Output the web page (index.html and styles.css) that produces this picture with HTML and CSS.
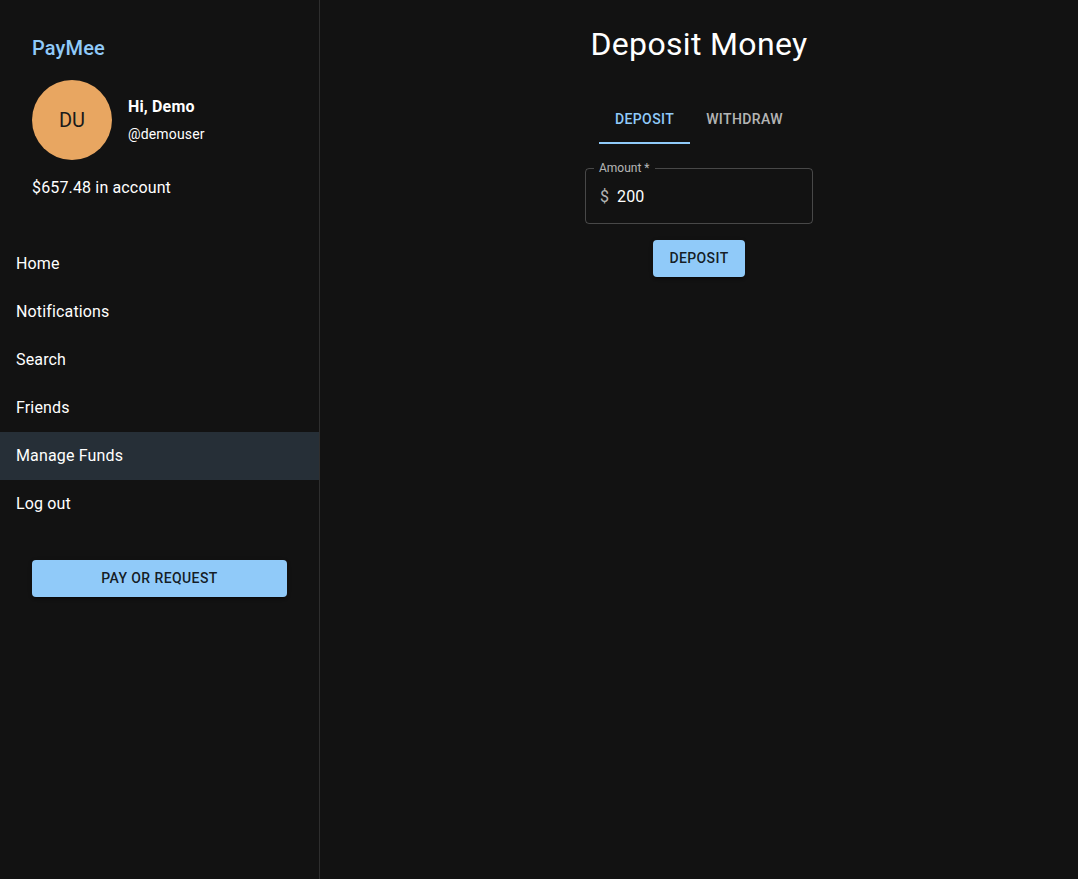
FILE: index.html
```html
<!DOCTYPE html>
<html lang="en">
<head>
<meta charset="utf-8">
<title>PayMee - Deposit Money</title>
<link rel="stylesheet" href="styles.css">
</head>
<body>
<div class="app">
  <aside class="sidebar">
    <div class="brand">PayMee</div>
    <div class="profile">
      <div class="avatar">DU</div>
      <div class="names">
        <div class="greeting">Hi, Demo</div>
        <div class="handle">@demouser</div>
      </div>
    </div>
    <div class="balance">$657.48 in account</div>
    <nav class="nav">
      <div class="nav-item">Home</div>
      <div class="nav-item">Notifications</div>
      <div class="nav-item">Search</div>
      <div class="nav-item">Friends</div>
      <div class="nav-item selected">Manage Funds</div>
      <div class="nav-item">Log out</div>
    </nav>
    <div class="pay-wrap">
      <button class="btn btn-wide">Pay or Request</button>
    </div>
  </aside>
  <main class="main">
    <h1 class="title">Deposit Money</h1>
    <div class="tabs">
      <div class="tab active">Deposit</div>
      <div class="tab">Withdraw</div>
    </div>
    <div class="field">
      <span class="field-label">Amount *</span>
      <span class="adorn">$</span>
      <span class="value">200</span>
    </div>
    <button class="btn btn-deposit">Deposit</button>
  </main>
</div>
</body>
</html>
```
FILE: styles.css
```css
* { box-sizing: border-box; }
html, body { margin: 0; padding: 0; }
body {
  background: #121212;
  color: #fff;
  font-family: Roboto, "Noto Sans", "Liberation Sans", sans-serif;
  height: 879px;
  overflow: hidden;
}
.app {
  display: flex;
  height: 879px;
}
.sidebar {
  width: 320px;
  flex: 0 0 320px;
  border-right: 1px solid rgba(255,255,255,0.12);
  display: flex;
  flex-direction: column;
  padding-top: 32px;
}
.brand {
  padding-left: 32px;
  font-size: 20px;
  font-weight: 500;
  line-height: 32px;
  letter-spacing: 0.0075em;
  color: #90caf9;
}
.profile {
  display: flex;
  align-items: center;
  gap: 16px;
  padding-left: 32px;
  margin-top: 16px;
}
.avatar {
  width: 80px;
  height: 80px;
  border-radius: 50%;
  background: #e8a661;
  color: #1a1a1a;
  display: flex;
  align-items: center;
  justify-content: center;
  font-size: 20px;
}
.names {
  display: flex;
  flex-direction: column;
  gap: 5px;
  margin-top: -2px;
}
.greeting {
  font-size: 16px;
  font-weight: 700;
  line-height: 24px;
  letter-spacing: 0.00938em;
}
.handle {
  font-size: 14px;
  line-height: 20px;
  letter-spacing: 0.01071em;
}
.balance {
  padding-left: 32px;
  margin-top: 16px;
  font-size: 16px;
  line-height: 24px;
  letter-spacing: 0.00938em;
}
.nav {
  margin-top: 40px;
  display: flex;
  flex-direction: column;
}
.nav-item {
  height: 48px;
  display: flex;
  align-items: center;
  padding-left: 16px;
  font-size: 16px;
  line-height: 24px;
  letter-spacing: 0.00938em;
}
.nav-item.selected {
  background: rgba(144,202,249,0.16);
}
.pay-wrap {
  padding: 0 32px;
  margin-top: 32px;
}
.btn {
  border: 0;
  border-radius: 4px;
  background: #90caf9;
  color: rgba(0,0,0,0.87);
  font-family: Roboto, "Noto Sans", "Liberation Sans", sans-serif;
  font-size: 14px;
  font-weight: 500;
  letter-spacing: 0.02857em;
  text-transform: uppercase;
  line-height: 24.5px;
  padding: 6px 16px;
  box-shadow: 0 3px 1px -2px rgba(0,0,0,0.2), 0 2px 2px 0 rgba(0,0,0,0.14), 0 1px 5px 0 rgba(0,0,0,0.12);
}
.btn-wide {
  width: 255px;
  display: block;
}
.main {
  flex: 1;
  display: flex;
  flex-direction: column;
  align-items: center;
}
.title {
  margin: 23px 0 0;
  font-size: 32px;
  font-weight: 400;
  line-height: 42px;
  letter-spacing: 0.35px;
}
.tabs {
  display: flex;
  margin-top: 31px;
}
.tab {
  height: 48px;
  min-width: 90px;
  padding: 12px 16px;
  display: flex;
  align-items: center;
  justify-content: center;
  font-size: 14px;
  font-weight: 500;
  letter-spacing: 0.02857em;
  text-transform: uppercase;
  color: rgba(255,255,255,0.7);
  border-bottom: 2px solid transparent;
}
.tab.active {
  color: #90caf9;
  border-bottom-color: #90caf9;
}
.field {
  position: relative;
  margin-top: 24px;
  width: 228px;
  height: 56px;
  border: 1px solid rgba(255,255,255,0.23);
  border-radius: 4px;
  display: flex;
  align-items: center;
  padding-left: 14px;
  font-size: 16px;
}
.field-label {
  position: absolute;
  top: -8px;
  left: 8px;
  padding: 0 5px;
  background: #121212;
  font-size: 12px;
  line-height: 14px;
  color: rgba(255,255,255,0.7);
}
.adorn {
  color: rgba(255,255,255,0.7);
  margin-right: 8px;
  font-size: 16px;
}
.value {
  color: #fff;
  letter-spacing: 0.00938em;
}
.btn-deposit {
  margin-top: 16px;
}
```
